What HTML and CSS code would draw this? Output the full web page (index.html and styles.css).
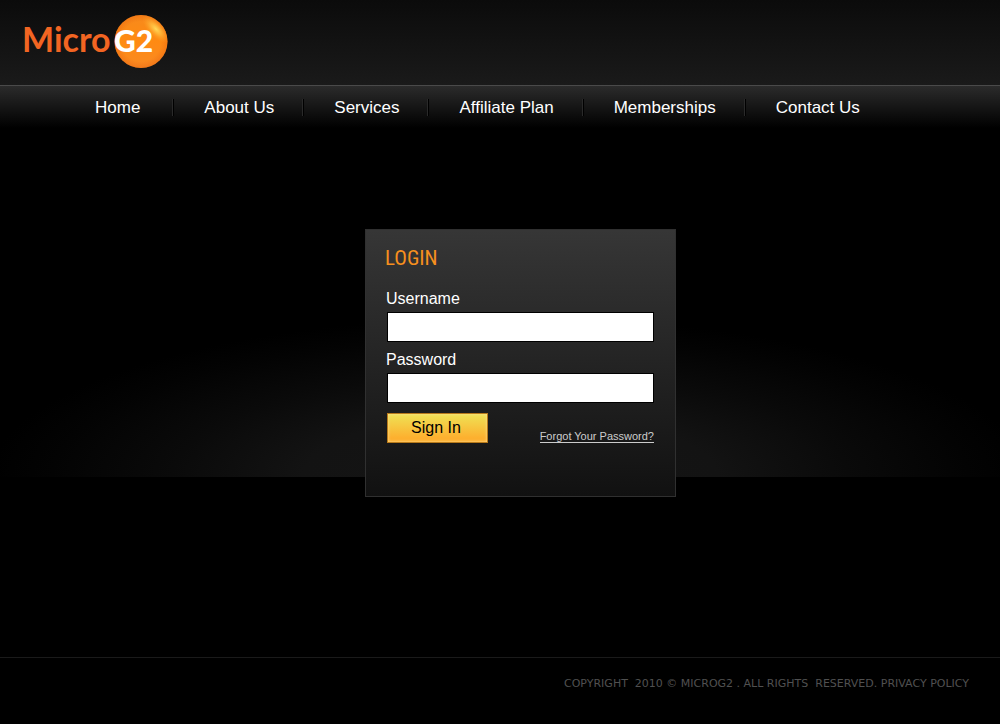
FILE: index.html
```html
<!DOCTYPE html>
<html lang="en">
<head>
<meta charset="utf-8">
<meta name="viewport" content="width=device-width, initial-scale=1">
<title>MicroG2 - Login</title>
<link rel="stylesheet" href="styles.css">
</head>
<body>
<div class="page">
  <header class="header">
    <a class="logo" href="#" aria-label="MicroG2">
      <svg width="148" height="56" viewBox="0 0 148 56" role="img" aria-label="MicroG2">
        <defs>
          <linearGradient id="ball" x1="0" y1="0" x2="0" y2="1">
            <stop offset="0" stop-color="#f78a1c"/>
            <stop offset="0.5" stop-color="#ff8a12"/>
            <stop offset="1" stop-color="#f98a24"/>
          </linearGradient>
          <radialGradient id="rim">
            <stop offset="0.75" stop-color="#e85f0c" stop-opacity="0"/>
            <stop offset="1" stop-color="#e85f0c" stop-opacity="0.4"/>
          </radialGradient>
          <radialGradient id="shine">
            <stop offset="0" stop-color="#ffd95a"/>
            <stop offset="0.4" stop-color="#ffc040" stop-opacity="0.7"/>
            <stop offset="1" stop-color="#ff9a20" stop-opacity="0"/>
          </radialGradient>
          <clipPath id="ball-clip">
            <circle cx="119" cy="28.5" r="26.5"/>
          </clipPath>
        </defs>
        <circle cx="119" cy="28.5" r="26.5" fill="url(#ball)"/>
        <circle cx="119" cy="28.5" r="26.5" fill="url(#rim)"/>
        <g clip-path="url(#ball-clip)">
          <ellipse cx="134" cy="16" rx="18" ry="8" fill="url(#shine)" transform="rotate(46 134 16)"/>
        </g>
        <text class="logo-micro" x="0" y="39">Micro</text>
        <text class="logo-g2" x="92" y="39">G2</text>
      </svg>
    </a>
  </header>
  <nav class="nav" aria-label="Main">
    <ul class="nav-list">
      <li class="nav-item"><a href="#">Home</a></li>
      <li class="nav-item"><a href="#">About Us</a></li>
      <li class="nav-item"><a href="#">Services</a></li>
      <li class="nav-item"><a href="#">Affiliate Plan</a></li>
      <li class="nav-item"><a href="#">Memberships</a></li>
      <li class="nav-item"><a href="#">Contact Us</a></li>
    </ul>
  </nav>
  <main class="main">
    <form class="login">
      <h1 class="login-title">LOGIN</h1>
      <div class="field">
        <label for="username">Username</label>
        <input id="username" name="username" type="text">
      </div>
      <div class="field">
        <label for="password">Password</label>
        <input id="password" name="password" type="password">
      </div>
      <div class="actions">
        <button class="signin" type="submit">Sign In</button>
        <a class="forgot" href="#">Forgot Your Password?</a>
      </div>
    </form>
  </main>
  <footer class="footer">
    <p class="copyright">COPYRIGHT &nbsp;2010 © MICROG2 . ALL RIGHTS &nbsp;RESERVED. <a href="#">PRIVACY POLICY</a></p>
  </footer>
</div>
</body>
</html>
```

FILE: styles.css
```css
* {
  box-sizing: border-box;
}

body {
  margin: 0;
  background: #000;
  color: #fff;
  font-family: "Liberation Sans", Arial, sans-serif;
}

a {
  color: inherit;
  text-decoration: none;
}

.page {
  display: flex;
  flex-direction: column;
  min-height: 100vh;
}

.header {
  padding: 13px 22px 16px;
  background: linear-gradient(#0b0b0b, #1a1a1a);
}

.logo,
.logo svg {
  display: block;
}

.logo {
  width: max-content;
}

.logo-micro,
.logo-g2 {
  font-family: Lato, sans-serif;
}

.logo-micro {
  font-size: 34px;
  font-weight: 700;
  fill: #f26522;
}

.logo-g2 {
  font-size: 30px;
  font-weight: 900;
  fill: #fff;
}

.nav {
  border-top: 1px solid #4a4a4a;
  background: linear-gradient(#2b2b2b, #000);
}

.nav-list {
  display: flex;
  align-items: center;
  margin: 0;
  padding: 1px 65px 0;
  min-height: 42px;
  list-style: none;
}

.nav-item {
  padding: 0 29px 0 30px;
  border-right: 1px solid #000;
  box-shadow: inset -1px 0 #2a2a2a;
  font-size: 17px;
  line-height: 17px;
  white-space: nowrap;
}

.nav-item:first-child {
  padding-right: 33px;
}

.nav-item:last-child {
  border-right: 0;
  box-shadow: none;
}

.main {
  flex: 1;
  display: flex;
  justify-content: center;
  align-items: flex-start;
  padding: 101px 0 60px 41px;
  background: radial-gradient(ellipse 52% 160px at 51% 100%, #151515 0%, #131313 40%, #0a0a0a 65%, #030303 88%, #000 100%) top / 100% 349px no-repeat;
}

.login {
  width: 311px;
  padding: 16px 21px 53px;
  border: 1px solid #303030;
  background: linear-gradient(#363636, #111);
}

.login-title {
  margin: 0 0 18px -2px;
  color: #f7901e;
  font-family: "Roboto Condensed", "Liberation Sans Narrow", "Liberation Sans", sans-serif;
  font-size: 21px;
  font-weight: 400;
  line-height: 24px;
}

.field {
  display: flex;
  flex-direction: column;
  gap: 2px;
  margin-bottom: 7px;
}

.field label {
  margin-left: -1px;
  font-size: 16px;
  line-height: 22px;
}

.field input {
  width: 100%;
  height: 30px;
  padding: 0 6px;
  border: 1px solid #000;
  border-radius: 0;
  background: #fff;
  font: inherit;
  font-size: 16px;
}

.actions {
  display: flex;
  justify-content: space-between;
  align-items: flex-end;
  padding-top: 3px;
}

.signin {
  height: 30px;
  padding: 0 26px 0 23px;
  border: 1px solid #b87a1a;
  border-radius: 0;
  background: linear-gradient(#efe255, #fdb02f 85%);
  box-shadow: inset 0 0 3px #ffe09a;
  color: #000;
  font-family: inherit;
  font-size: 16px;
  white-space: nowrap;
}

.forgot {
  border-bottom: 1px solid #ccc;
  color: #ccc;
  font-size: 11px;
  line-height: 12px;
}

.footer {
  padding: 16px 31px 30px;
  border-top: 1px solid #1a1a1a;
}

.copyright {
  margin: 0;
  color: #505050;
  font-family: "DejaVu Sans", sans-serif;
  font-size: 11px;
  line-height: 20px;
  text-align: right;
}
```
